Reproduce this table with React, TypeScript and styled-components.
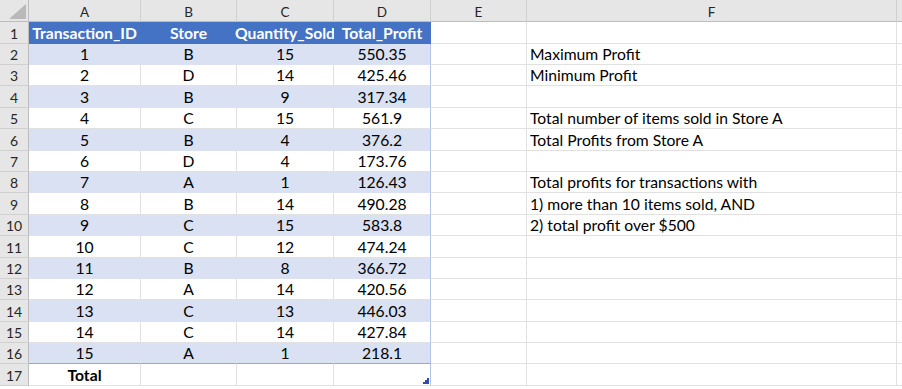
import React from 'react';
import styled, { createGlobalStyle, css } from 'styled-components';

const Global = createGlobalStyle`
  html, body { margin: 0; padding: 0; background: #ffffff; }
  body { font-family: Lato, "Liberation Sans", sans-serif; }
`;

const Sheet = styled.div`
  display: grid;
  grid-template-columns: 29px 112px 96px 97px 97px 96px 370px 1fr;
  grid-template-rows: 22px 22px 21px 21px 22px 21px 22px 21px 21px 22px 21px 22px 21px 21px 22px 21px 21px 22px;
  width: 902px;
  font-family: Lato, "Liberation Sans", sans-serif;
  color: #000;
`;

const Corner = styled.div`
  position: relative;
  background: #e6e6e6;
  border-right: 1px solid #bdbdbd;
  border-bottom: 1px solid #bdbdbd;
  box-sizing: border-box;
  display: flex;
  align-items: flex-end;
  justify-content: flex-end;
  padding: 0 2px 2px 0;
`;

const ColHead = styled.div`
  background: #e6e6e6;
  border-right: 1px solid #d0d0d0;
  border-bottom: 1px solid #bdbdbd;
  box-sizing: border-box;
  display: flex;
  align-items: flex-end;
  justify-content: center;
  padding-bottom: 2px;
  font-size: 13.5px;
  line-height: 1;
  color: #262626;
`;

const RowHead = styled.div`
  background: #e6e6e6;
  border-right: 1px solid #bdbdbd;
  border-bottom: 1px solid #d0d0d0;
  box-sizing: border-box;
  display: flex;
  align-items: flex-end;
  justify-content: center;
  padding-bottom: 2px;
  font-size: 14px;
  line-height: 1;
  color: #262626;
`;

type Tone = 'head' | 'band' | 'plain';

const Cell = styled.div<{ $tone: Tone; $align?: 'center' | 'left'; $bold?: boolean; $edge?: boolean; $rule?: boolean }>`
  position: relative;
  box-sizing: border-box;
  display: flex;
  align-items: flex-end;
  justify-content: ${(p) => (p.$align === 'left' ? 'flex-start' : 'center')};
  padding: 0 3px 1px 3px;
  font-size: 15.7px;
  line-height: 1;
  white-space: nowrap;
  font-weight: ${(p) => (p.$bold ? 700 : 400)};
  border-right: 1px solid #e1e1e1;
  border-bottom: 1px solid #e1e1e1;
  ${(p) =>
    p.$tone === 'head' &&
    css`
      background: #4472c4;
      color: #ffffff;
      font-weight: 700;
      border-right-color: #4472c4;
      border-bottom-color: #4472c4;
    `}
  ${(p) =>
    p.$tone === 'band' &&
    css`
      background: #d9e1f2;
      border-right-color: #d9e1f2;
      border-bottom-color: #d9e1f2;
    `}
  ${(p) =>
    p.$edge &&
    css`
      border-right-color: #b4c6e7;
    `}
  ${(p) =>
    p.$rule &&
    css`
      border-bottom-color: #8ea9db;
    `}
`;

const Handle = styled.svg`
  position: absolute;
  right: 1px;
  bottom: 1px;
  width: 6px;
  height: 6px;
`;

const data: [number, string, number, string][] = [
  [1, 'B', 15, '550.35'],
  [2, 'D', 14, '425.46'],
  [3, 'B', 9, '317.34'],
  [4, 'C', 15, '561.9'],
  [5, 'B', 4, '376.2'],
  [6, 'D', 4, '173.76'],
  [7, 'A', 1, '126.43'],
  [8, 'B', 14, '490.28'],
  [9, 'C', 15, '583.8'],
  [10, 'C', 12, '474.24'],
  [11, 'B', 8, '366.72'],
  [12, 'A', 14, '420.56'],
  [13, 'C', 13, '446.03'],
  [14, 'C', 14, '427.84'],
  [15, 'A', 1, '218.1'],
];

const notes: Record<number, string> = {
  2: 'Maximum Profit',
  3: 'Minimum Profit',
  5: 'Total number of items sold in Store A',
  6: 'Total Profits from Store A',
  8: 'Total profits for transactions with',
  9: '1) more than 10 items sold, AND',
  10: '2) total profit over $500',
};

const letters = ['A', 'B', 'C', 'D', 'E', 'F', ''];

export default function App() {
  const rows: React.ReactNode[] = [];

  rows.push(
    <React.Fragment key="r1">
      <RowHead>1</RowHead>
      <Cell $tone="head">Transaction_ID</Cell>
      <Cell $tone="head">Store</Cell>
      <Cell $tone="head">Quantity_Sold</Cell>
      <Cell $tone="head">Total_Profit</Cell>
      <Cell $tone="plain" />
      <Cell $tone="plain" $align="left" />
      <Cell $tone="plain" />
    </React.Fragment>
  );

  data.forEach((d, i) => {
    const rowNum = i + 2;
    const tone: Tone = rowNum % 2 === 0 ? 'band' : 'plain';
    const last = i === data.length - 1;
    rows.push(
      <React.Fragment key={`r${rowNum}`}>
        <RowHead>{rowNum}</RowHead>
        <Cell $tone={tone} $rule={last}>{d[0]}</Cell>
        <Cell $tone={tone} $rule={last}>{d[1]}</Cell>
        <Cell $tone={tone} $rule={last}>{d[2]}</Cell>
        <Cell $tone={tone} $rule={last} $edge>{d[3]}</Cell>
        <Cell $tone="plain" />
        <Cell $tone="plain" $align="left">{notes[rowNum] ?? ''}</Cell>
        <Cell $tone="plain" />
      </React.Fragment>
    );
  });

  rows.push(
    <React.Fragment key="r17">
      <RowHead>17</RowHead>
      <Cell $tone="plain" $bold>Total</Cell>
      <Cell $tone="plain" />
      <Cell $tone="plain" />
      <Cell $tone="plain" $edge>
        <Handle viewBox="0 0 6 6">
          <path d="M4 0 H6 V6 H0 V4 H2 V2 H4 Z" fill="#2f4ea3" />
        </Handle>
      </Cell>
      <Cell $tone="plain" />
      <Cell $tone="plain" $align="left" />
      <Cell $tone="plain" />
    </React.Fragment>
  );

  return (
    <>
      <Global />
      <Sheet>
        <Corner>
          <svg width="17" height="15" viewBox="0 0 17 15">
            <polygon points="17,0 17,15 0,15" fill="#b9b9b9" />
          </svg>
        </Corner>
        {letters.map((l, i) => (
          <ColHead key={i}>{l}</ColHead>
        ))}
        {rows}
      </Sheet>
    </>
  );
}
